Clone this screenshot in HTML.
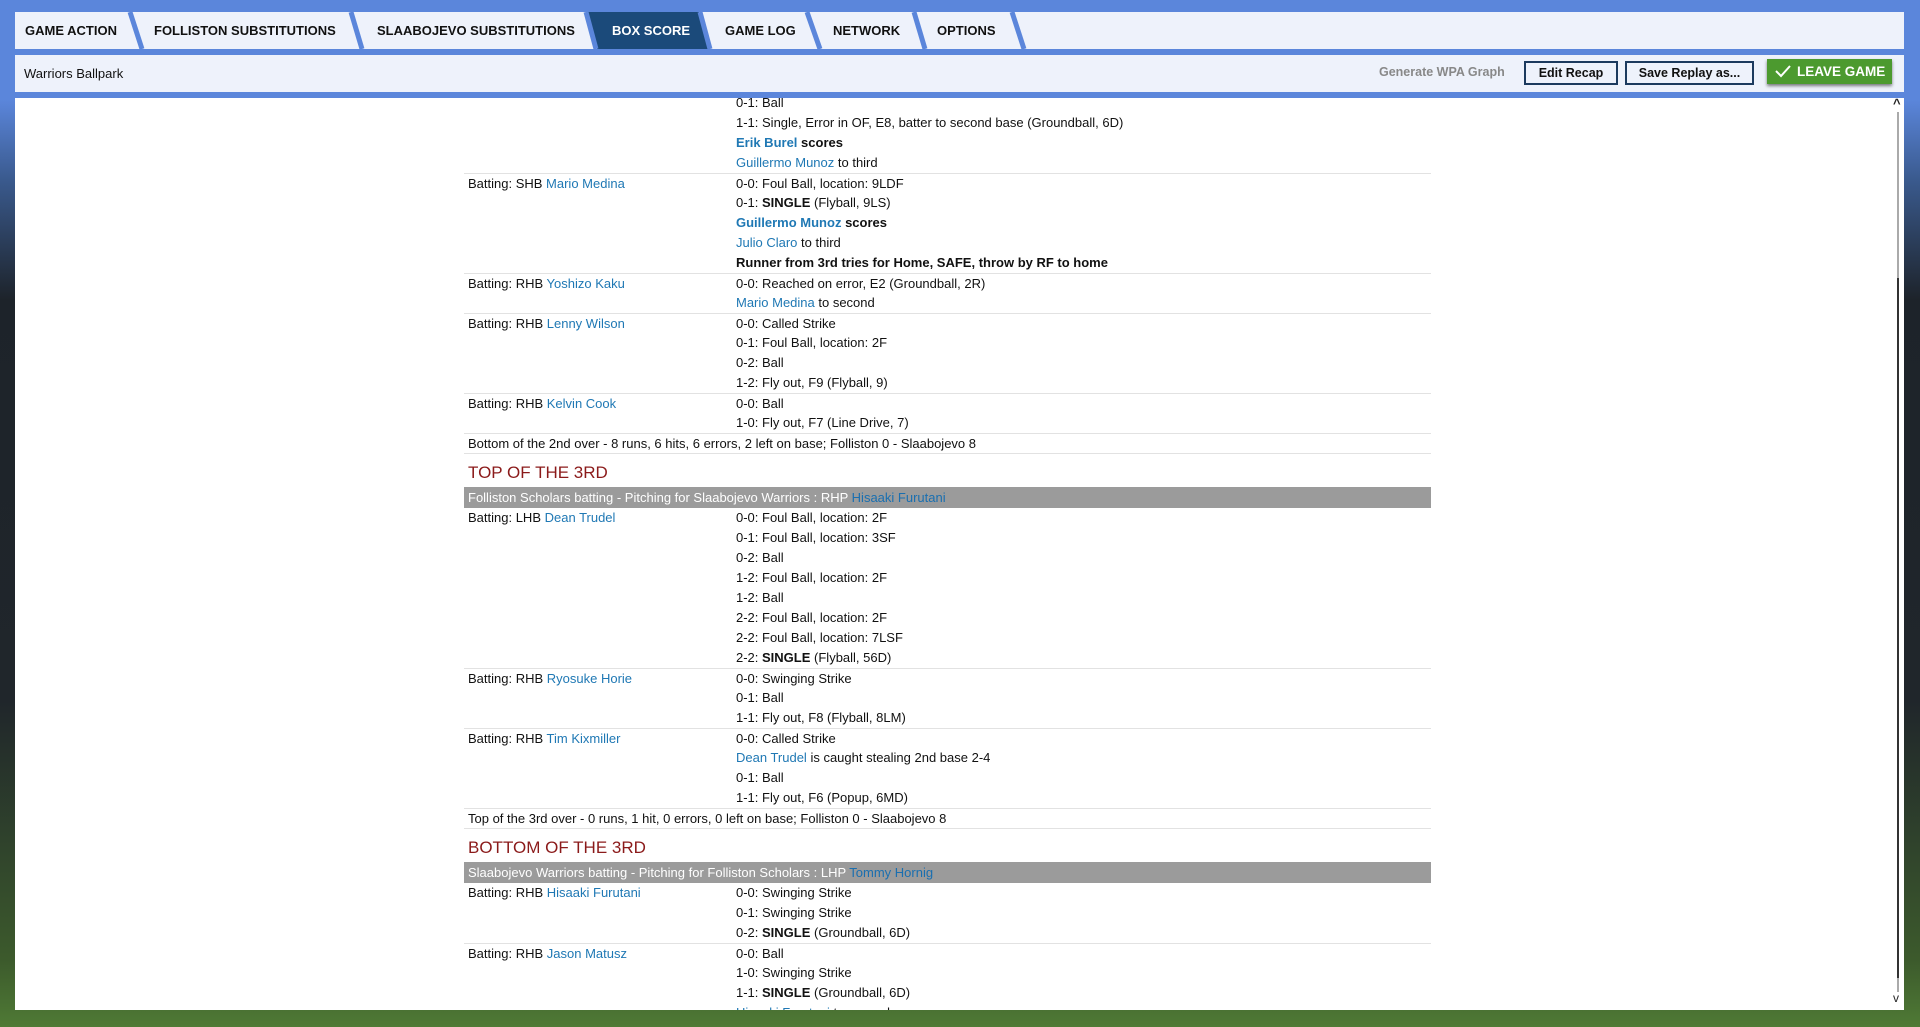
<!DOCTYPE html>
<html><head><meta charset="utf-8">
<style>
*{margin:0;padding:0;box-sizing:border-box}
body{width:1920px;height:1027px;overflow:hidden;position:relative;font-family:"Liberation Sans",sans-serif;
background:linear-gradient(180deg,#5b86db 0,#5b86db 100px,#3a5a8e 180px,#1d232a 300px,#20262b 700px,#3c5a2c 960px,#4f7a35 1027px);}
.strip{position:absolute;left:15px;top:12px;width:1889px;height:37px;background:#eef2fb}
.tab{position:absolute;top:12px;height:37px;line-height:37px;font-weight:bold;font-size:13px;color:#111;white-space:nowrap}
.bar2{position:absolute;left:15px;top:55px;width:1889px;height:37px;background:#eef2fb}
.btn{position:absolute;top:61px;height:24px;border:2px solid #1c3a5e;background:#eef2fb;font-weight:bold;font-size:12.5px;line-height:20px;text-align:center;color:#111}
.panel{position:absolute;left:15px;top:98px;width:1889px;height:912px;background:#fff;overflow:hidden}
.list{position:absolute;left:449px;top:-5px;width:967px;font-size:13px;color:#111}
.r{height:20px;line-height:20px;position:relative;white-space:nowrap}
.r.s{border-top:1px solid #e2e2e2}
.a{position:absolute;left:4px}
.b{position:absolute;left:272px}
a,.l{color:#1f78b4;text-decoration:none}
.h{height:34px;line-height:38px;color:#8b1a1a;font-size:17px;padding-left:4px;border-top:1px solid #e2e2e2}
.g{height:21px;line-height:21px;background:#9b9b9b;color:#fff;padding-left:4px}
.g .l{color:#1a6fb0}
</style></head><body>
<div class="strip"></div>
<svg style="position:absolute;left:0;top:12px" width="1920" height="37">
<polygon points="587,0 699,0 709,37 597,37" fill="#1b4a7a"/>
<g stroke="#5b86db" stroke-width="5">
<line x1="130" y1="0" x2="142" y2="37"/><line x1="351" y1="0" x2="362" y2="37"/>
<line x1="586" y1="0" x2="596" y2="37"/><line x1="700" y1="0" x2="710" y2="37"/>
<line x1="807" y1="0" x2="820" y2="37"/><line x1="914" y1="0" x2="925" y2="37"/>
<line x1="1012" y1="0" x2="1024" y2="37"/></g></svg>
<div class="tab" style="left:25px">GAME ACTION</div>
<div class="tab" style="left:154px">FOLLISTON SUBSTITUTIONS</div>
<div class="tab" style="left:377px">SLAABOJEVO SUBSTITUTIONS</div>
<div class="tab" style="left:612px;color:#fff">BOX SCORE</div>
<div class="tab" style="left:725px">GAME LOG</div>
<div class="tab" style="left:833px">NETWORK</div>
<div class="tab" style="left:937px">OPTIONS</div>
<div class="bar2"></div>
<div style="position:absolute;left:24px;top:66px;font-size:13px;color:#111">Warriors Ballpark</div>
<div style="position:absolute;left:1379px;top:65px;font-size:12.5px;font-weight:bold;color:#888">Generate WPA Graph</div>
<div class="btn" style="left:1524px;width:94px">Edit Recap</div>
<div class="btn" style="left:1625px;width:129px">Save Replay as...</div>
<div style="position:absolute;left:1767px;top:59px;width:125px;height:25px;background:#4c9a2f;box-shadow:0 2px 3px rgba(0,0,0,.5);color:#fff;font-weight:bold;font-size:13.5px;line-height:25px;padding-left:30px">LEAVE GAME
<svg style="position:absolute;left:8px;top:5px" width="16" height="14"><path d="M1 7 L6 12 L15 2" stroke="#fff" stroke-width="2" fill="none"/></svg></div>
<div class="panel">
<div class="list">
<div class="r"><span class="b">0-1: Ball</span></div>
<div class="r"><span class="b">1-1: Single, Error in OF, E8, batter to second base (Groundball, 6D)</span></div>
<div class="r"><span class="b"><b class="l">Erik Burel</b> <b>scores</b></span></div>
<div class="r"><span class="b"><a>Guillermo Munoz</a> to third</span></div>
<div class="r s"><span class="a">Batting: SHB <a>Mario Medina</a></span><span class="b">0-0: Foul Ball, location: 9LDF</span></div>
<div class="r"><span class="b">0-1: <b>SINGLE</b> (Flyball, 9LS)</span></div>
<div class="r"><span class="b"><b class="l">Guillermo Munoz</b> <b>scores</b></span></div>
<div class="r"><span class="b"><a>Julio Claro</a> to third</span></div>
<div class="r"><span class="b"><b>Runner from 3rd tries for Home, SAFE, throw by RF to home</b></span></div>
<div class="r s"><span class="a">Batting: RHB <a>Yoshizo Kaku</a></span><span class="b">0-0: Reached on error, E2 (Groundball, 2R)</span></div>
<div class="r"><span class="b"><a>Mario Medina</a> to second</span></div>
<div class="r s"><span class="a">Batting: RHB <a>Lenny Wilson</a></span><span class="b">0-0: Called Strike</span></div>
<div class="r"><span class="b">0-1: Foul Ball, location: 2F</span></div>
<div class="r"><span class="b">0-2: Ball</span></div>
<div class="r"><span class="b">1-2: Fly out, F9 (Flyball, 9)</span></div>
<div class="r s"><span class="a">Batting: RHB <a>Kelvin Cook</a></span><span class="b">0-0: Ball</span></div>
<div class="r"><span class="b">1-0: Fly out, F7 (Line Drive, 7)</span></div>
<div class="r s"><span class="a">Bottom of the 2nd over - 8 runs, 6 hits, 6 errors, 2 left on base; Folliston 0 - Slaabojevo 8</span></div>
<div class="h">TOP OF THE 3RD</div>
<div class="g">Folliston Scholars batting - Pitching for Slaabojevo Warriors : RHP <span class="l">Hisaaki Furutani</span></div>
<div class="r"><span class="a">Batting: LHB <a>Dean Trudel</a></span><span class="b">0-0: Foul Ball, location: 2F</span></div>
<div class="r"><span class="b">0-1: Foul Ball, location: 3SF</span></div>
<div class="r"><span class="b">0-2: Ball</span></div>
<div class="r"><span class="b">1-2: Foul Ball, location: 2F</span></div>
<div class="r"><span class="b">1-2: Ball</span></div>
<div class="r"><span class="b">2-2: Foul Ball, location: 2F</span></div>
<div class="r"><span class="b">2-2: Foul Ball, location: 7LSF</span></div>
<div class="r"><span class="b">2-2: <b>SINGLE</b> (Flyball, 56D)</span></div>
<div class="r s"><span class="a">Batting: RHB <a>Ryosuke Horie</a></span><span class="b">0-0: Swinging Strike</span></div>
<div class="r"><span class="b">0-1: Ball</span></div>
<div class="r"><span class="b">1-1: Fly out, F8 (Flyball, 8LM)</span></div>
<div class="r s"><span class="a">Batting: RHB <a>Tim Kixmiller</a></span><span class="b">0-0: Called Strike</span></div>
<div class="r"><span class="b"><a>Dean Trudel</a> is caught stealing 2nd base 2-4</span></div>
<div class="r"><span class="b">0-1: Ball</span></div>
<div class="r"><span class="b">1-1: Fly out, F6 (Popup, 6MD)</span></div>
<div class="r s"><span class="a">Top of the 3rd over - 0 runs, 1 hit, 0 errors, 0 left on base; Folliston 0 - Slaabojevo 8</span></div>
<div class="h">BOTTOM OF THE 3RD</div>
<div class="g">Slaabojevo Warriors batting - Pitching for Folliston Scholars : LHP <span class="l">Tommy Hornig</span></div>
<div class="r"><span class="a">Batting: RHB <a>Hisaaki Furutani</a></span><span class="b">0-0: Swinging Strike</span></div>
<div class="r"><span class="b">0-1: Swinging Strike</span></div>
<div class="r"><span class="b">0-2: <b>SINGLE</b> (Groundball, 6D)</span></div>
<div class="r s"><span class="a">Batting: RHB <a>Jason Matusz</a></span><span class="b">0-0: Ball</span></div>
<div class="r"><span class="b">1-0: Swinging Strike</span></div>
<div class="r"><span class="b">1-1: <b>SINGLE</b> (Groundball, 6D)</span></div>
<div class="r"><span class="b"><a>Hisaaki Furutani</a> to second</span></div>
</div>
<div style="position:absolute;left:1882px;top:14px;width:2px;height:880px;background:#aaa"></div>
<div style="position:absolute;left:1882px;top:180px;width:2px;height:700px;background:#333"></div>
<div style="position:absolute;left:1878px;top:-2px;font-size:13px;font-weight:bold;color:#222">^</div>
<div style="position:absolute;left:1878px;top:893px;font-size:12px;color:#222">v</div>
</div>
</body></html>
